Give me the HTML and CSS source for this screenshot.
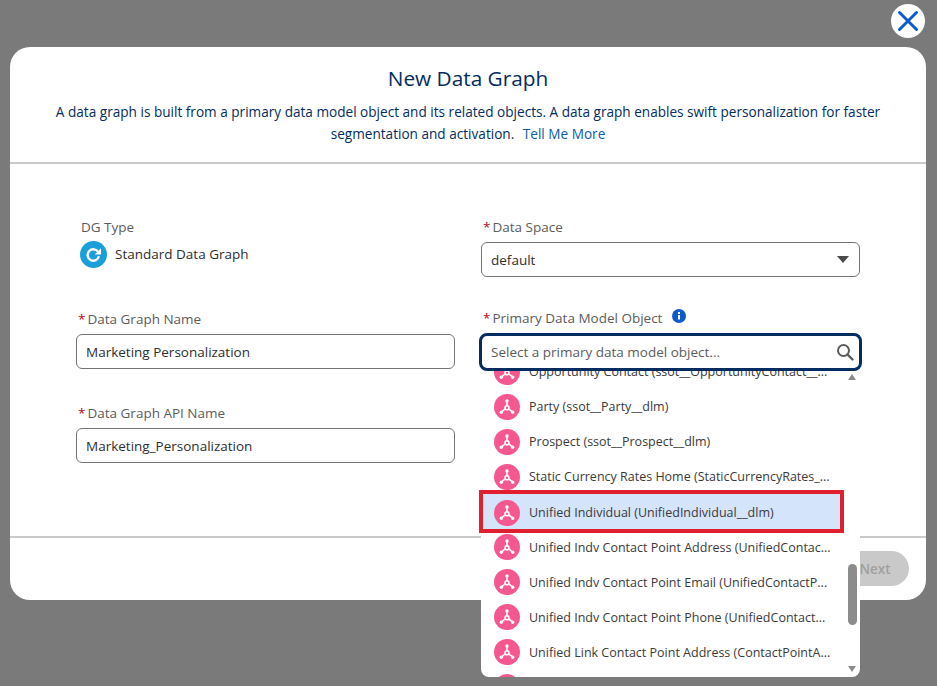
FILE: index.html
```html
<!DOCTYPE html>
<html>
<head>
	<meta charset="UTF-8">
	<title>New Data Graph</title>
	<link rel="stylesheet" href="styles.css">
</head>
<body>
	<svg class="sprites" width="0" height="0">
		<symbol id="graph" viewBox="0 0 26 26">
			<circle cx="13" cy="13" r="13" fill="#f4588e"/>
			<g stroke="#fff" stroke-width="1.6" fill="none" stroke-linecap="round">
				<path d="M13 8.5V12"/>
				<path d="M11 15 8 17.6"/>
				<path d="M15 15l3 2.6"/>
				<circle cx="13" cy="13.8" r="2"/>
			</g>
			<circle cx="13" cy="7" r="1.7" fill="#fff"/>
			<circle cx="7.3" cy="18.2" r="1.7" fill="#fff"/>
			<circle cx="18.7" cy="18.2" r="1.7" fill="#fff"/>
		</symbol>
	</svg>

	<button class="close" type="button">
		<svg width="24" height="24" viewBox="0 0 24 24"><path d="M3.5 3.5l17 17M20.500 3.500l-17 17" stroke="#0b5cc9" stroke-width="3" stroke-linecap="round"/></svg>
	</button>

	<div class="modal">
		<div class="modal-header">
			<h1 class="title">New Data Graph</h1>
			<p class="intro">A data graph is built from a primary data model object and its related objects. A data graph enables swift personalization for faster segmentation and activation. <a class="link" href="#">Tell Me More</a></p>
		</div>

		<div class="modal-body">
			<div class="form-grid">
				<div class="field">
					<div class="label label-plain">DG Type</div>
					<div class="dg-type">
						<svg width="27" height="27" viewBox="0 0 27 27">
							<circle cx="13.500" cy="13.500" r="13.500" fill="#1b9fdb"/>
							<path d="M18.300 11.200a5.700 5.700 0 1 0 .6 4" fill="none" stroke="#fff" stroke-width="2.400"/>
							<path d="M21 7.200v6.300h-6.300z" fill="#fff"/>
						</svg>
						<span class="dg-name">Standard Data Graph</span>
					</div>
				</div>
				<div class="field">
					<div class="label"><span class="req">*</span>Data Space</div>
					<div class="input select">
						<span>default</span>
						<span class="caret"></span>
					</div>
				</div>
				<div class="field">
					<div class="label"><span class="req">*</span>Data Graph Name</div>
					<div class="input">Marketing Personalization</div>
				</div>
				<div class="field">
					<div class="label label-info"><span class="req">*</span>Primary Data Model Object
						<svg class="info" width="14" height="14" viewBox="0 0 14 14">
							<circle cx="7" cy="7" r="7" fill="#0b5cc9"/>
							<rect x="6" y="6" width="2" height="4.500" fill="#fff"/>
							<rect x="6" y="3" width="2" height="2" fill="#fff"/>
						</svg>
					</div>
					<div class="combo">
						<div class="input input-focus">
							<span class="placeholder">Select a primary data model object...</span>
							<svg width="18" height="18" viewBox="0 0 18 18"><circle cx="7.500" cy="7.500" r="5.500" fill="none" stroke="#5c5c5c" stroke-width="2"/><path d="M11.500 11.500 16.500 16.500" stroke="#5c5c5c" stroke-width="2.400" stroke-linecap="round"/></svg>
						</div>
						<div class="dropdown">
							<ul class="options">
								<li class="option"><svg width="26" height="26"><use href="#graph"/></svg><span>Opportunity Contact (ssot__OpportunityContact__...</span></li>
								<li class="option"><svg width="26" height="26"><use href="#graph"/></svg><span>Party (ssot__Party__dlm)</span></li>
								<li class="option"><svg width="26" height="26"><use href="#graph"/></svg><span>Prospect (ssot__Prospect__dlm)</span></li>
								<li class="option"><svg width="26" height="26"><use href="#graph"/></svg><span>Static Currency Rates Home (StaticCurrencyRates_...</span></li>
								<li class="option option-selected"><svg width="26" height="26"><use href="#graph"/></svg><span>Unified Individual (UnifiedIndividual__dlm)</span></li>
								<li class="option"><svg width="26" height="26"><use href="#graph"/></svg><span>Unified Indv Contact Point Address (UnifiedContac...</span></li>
								<li class="option"><svg width="26" height="26"><use href="#graph"/></svg><span>Unified Indv Contact Point Email (UnifiedContactP...</span></li>
								<li class="option"><svg width="26" height="26"><use href="#graph"/></svg><span>Unified Indv Contact Point Phone (UnifiedContact...</span></li>
								<li class="option"><svg width="26" height="26"><use href="#graph"/></svg><span>Unified Link Contact Point Address (ContactPointA...</span></li>
								<li class="option"><svg width="26" height="26"><use href="#graph"/></svg></li>
							</ul>
							<div class="scroll">
								<span class="arrow arrow-up"></span>
								<span class="thumb"></span>
								<span class="arrow arrow-down"></span>
							</div>
						</div>
						<div class="highlight"></div>
					</div>
				</div>
				<div class="field">
					<div class="label"><span class="req">*</span>Data Graph API Name</div>
					<div class="input">Marketing_Personalization</div>
				</div>
			</div>
		</div>

		<div class="modal-footer">
			<button class="next" type="button">Next</button>
		</div>
	</div>
</body>
</html>
```

FILE: styles.css
```css
* {
	box-sizing: border-box;
}
html, body {
	height: 100%;
}
body {
	margin: 0;
	padding: 47px 11px 0 10px;
	background-color: #7a7a7a;
	font-family: "Open Sans", "Noto Sans", sans-serif;
	font-size: 13.500px;
	color: #2e2e2e;
	overflow: hidden;
	position: relative;
}
.sprites {
	position: absolute;
}
.close {
	position: absolute;
	top: 4px;
	left: 891px;
	width: 34px;
	height: 34px;
	padding: 0;
	border: none;
	border-radius: 50%;
	background-color: white;
	display: flex;
	align-items: center;
	justify-content: center;
}
.modal {
	background-color: white;
	height: 553px;
	border-radius: 20px;
	display: flex;
	flex-direction: column;
}
.modal-header {
	height: 117px;
	padding: 18px 40px 0;
	border-bottom: 2px solid #c9c9c9;
	text-align: center;
}
.title {
	margin: 0 0 9px;
	font-size: 20.800px;
	line-height: 27px;
	font-weight: 400;
	color: #032d60;
}
.intro {
	margin: 0;
	font-size: 13.600px;
	line-height: 22px;
	color: #032d60;
}
.link {
	margin-left: 5px;
	color: #0b5cab;
	text-decoration: none;
}
.modal-body {
	flex: 1;
	padding: 55px 66px 0;
}
.form-grid {
	display: grid;
	grid-template-columns: 379px 379px;
	grid-template-rows: 92px 94px 92px;
	column-gap: 26px;
}
.label {
	height: 18px;
	font-size: 13.500px;
	line-height: 18px;
	color: #5c5c5c;
	margin-top: -1px;
	margin-bottom: 6px;
	padding-left: 2px;
}
.label-plain {
	padding-left: 5px;
}
.label-info {
	margin-top: -2px;
	margin-bottom: 8px;
}
.req {
	color: #ba0517;
	margin-right: 2px;
}
.info {
	vertical-align: 0;
	margin-left: 6px;
}
.dg-type {
	display: flex;
	align-items: center;
	gap: 8px;
	margin-top: -1px;
	padding: 0 4px;
	color: #2e2e2e;
}
.dg-name {
	padding-bottom: 2px;
}
.input {
	height: 35px;
	padding: 0 9px;
	border: 1px solid #747474;
	border-radius: 6px;
	background-color: white;
	display: flex;
	align-items: center;
	justify-content: space-between;
	font-size: 13.500px;
}
.input-focus {
	height: 38px;
	margin: -2px -2px 0;
	border: 3px solid #032d60;
	border-radius: 8px;
	padding: 0 5px 0 9px;
	position: relative;
	z-index: 2;
}
.placeholder {
	color: #5c5c5c;
}
.select {
	padding-right: 10px;
}
.caret {
	border-left: 6px solid transparent;
	border-right: 6px solid transparent;
	border-top: 7px solid #4a4a4a;
}
.combo {
	position: relative;
}
.dropdown {
	position: absolute;
	top: 34px;
	left: 0;
	width: 379px;
	height: 310px;
	background-color: white;
	border-radius: 0 0 8px 8px;
	overflow: hidden;
	z-index: 1;
}
.options {
	list-style: none;
	margin: -13px 0 0;
	padding: 0;
}
.option {
	height: 35.100px;
	padding-left: 13px;
	display: flex;
	align-items: center;
	gap: 9px;
	font-size: 12.500px;
	white-space: nowrap;
	color: #3a3a3a;
}
.option-selected {
	width: 360px;
	padding-top: 2px;
	background-color: #d4e4fb;
}
.highlight {
	position: absolute;
	top: 157px;
	left: -2px;
	width: 365px;
	height: 43px;
	border: 4px solid #e0202e;
	z-index: 2;
}
.scroll {
	position: absolute;
	top: 0;
	right: 0;
	width: 20px;
	height: 100%;
}
.thumb {
	position: absolute;
	top: 197px;
	left: 8px;
	width: 9px;
	height: 61px;
	border-radius: 5px;
	background-color: #8c8c8c;
}
.arrow {
	position: absolute;
	left: 8px;
	border-left: 4.500px solid transparent;
	border-right: 4.500px solid transparent;
}
.arrow-up {
	top: 7px;
	border-bottom: 6px solid #8c8c8c;
}
.arrow-down {
	bottom: 5px;
	border-top: 6px solid #8c8c8c;
}
.modal-footer {
	height: 64px;
	border-top: 2px solid #c9c9c9;
	padding: 13px 17px 0 0;
	display: flex;
	justify-content: flex-end;
	align-items: flex-start;
}
.next {
	width: 70px;
	height: 35px;
	border: none;
	border-radius: 18px;
	background-color: #c9c9c9;
	color: #a0a0a0;
	font-family: inherit;
	font-size: 13.500px;
	font-weight: 600;
	padding: 0 0 0 2px;
}
```
